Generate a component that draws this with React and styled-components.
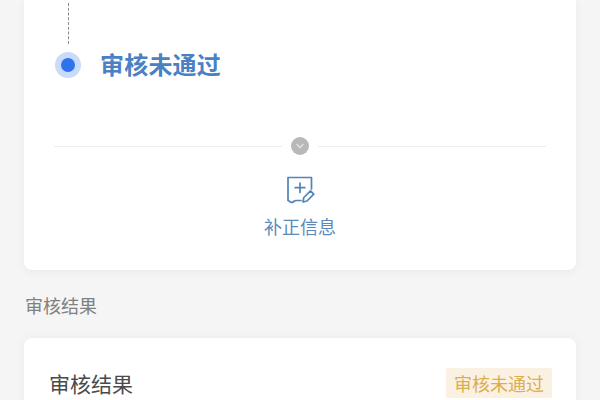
import React from "react";
import styled, { createGlobalStyle } from "styled-components";

const Global = createGlobalStyle`
  html, body { margin: 0; padding: 0; width: 600px; height: 400px; overflow: hidden; background: #f5f5f5; }
  body { font-family: "Noto Sans CJK SC", "Noto Sans", sans-serif; }
`;
const Page = styled.div`
  width: 600px; height: 400px; overflow: hidden; background: #f5f5f5;
  display: flex; flex-direction: column; padding: 0 24px; box-sizing: border-box;
`;
const Card = styled.section`
  flex: none; background: #fff; border-radius: 0 0 8px 8px;
  box-shadow: 0 2px 10px rgba(0,0,0,.05);
  height: 270px; padding: 3px 30px 0; box-sizing: border-box;
  display: flex; flex-direction: column;
`;
const Connector = styled.div`
  width: 0; height: 41px; margin-left: 13.5px;
  border-left: 1px dashed #8a8a8a;
`;
const StepRow = styled.div`
  display: flex; align-items: center; gap: 20px; margin-top: 7px; height: 28px;
`;
const Dot = styled.span`
  width: 26px; height: 26px; border-radius: 50%; background: #c9dbf8;
  display: flex; align-items: center; justify-content: center; margin-left: 1px;
  &::after { content: ""; width: 14px; height: 14px; border-radius: 50%; background: #2f72ee; }
`;
const StepTitle = styled.span`
  font-size: 24px; font-weight: 700; line-height: 26px; color: #4a80c4; margin: -2px 0 0 -1px; letter-spacing: 0.2px;
`;
const DividerRow = styled.div`
  display: flex; align-items: center; gap: 9px; margin-top: 58px; height: 18px;
`;
const Line = styled.span`flex: 1; height: 1px; background: #eeeeee;`;
const Toggle = styled.span`
  width: 18px; height: 18px; border-radius: 50%; background: #b8b8b8;
  display: flex; align-items: center; justify-content: center;
`;
const Action = styled.div`
  display: flex; flex-direction: column; align-items: center; margin-top: 20px;
`;
const ActionIcon = styled.svg`width: 30px; height: 30px;`;
const ActionLabel = styled.span`
  font-size: 18px; line-height: 24px; color: #5a8abb; margin-top: 9px;
`;
const SectionTitle = styled.h2`
  margin: 23px 0 0 1px; font-size: 18px; line-height: 24px; font-weight: 400; color: #808080;
`;
const ResultCard = styled.section`
  flex: none; margin-top: 21px; background: #fff; border-radius: 8px 8px 0 0;
  box-shadow: 0 0 10px rgba(0,0,0,.05);
  height: 100px; padding: 30px 24px 0 26px; box-sizing: border-box;
  display: flex; justify-content: space-between; align-items: flex-start;
`;
const ResultLabel = styled.span`font-size: 21px; line-height: 30px; color: #4a4a4a; margin-left: -1px;`;
const Badge = styled.span`
  font-size: 18px; line-height: 30px; color: #dcae4c; background: #fbf1e2;
  padding: 0 8px; border-radius: 2px;
`;

export default function App() {
  return (
    <Page>
      <Global />
      <Card>
        <Connector />
        <StepRow>
          <Dot />
          <StepTitle>审核未通过</StepTitle>
        </StepRow>
        <DividerRow>
          <Line />
          <Toggle>
            <svg width="10" height="10" viewBox="0 0 10 10" fill="none" stroke="#e0e0e0" strokeWidth="1.6" strokeLinecap="round" strokeLinejoin="round">
              <path d="M2 3.5 5 6.5 8 3.5" />
            </svg>
          </Toggle>
          <Line />
        </DividerRow>
        <Action>
          <ActionIcon viewBox="0 0 30 30" fill="none" stroke="#5282b8" strokeWidth="1.7" strokeLinecap="round" strokeLinejoin="round">
            <path d="M16 25.5H11C9 25.5 8.5 27.5 6.5 27.5S4.5 25.5 3 25.5V2.5H26.5V14" />
            <path d="M15 8V17.5M10.2 12.7H19.8" />
            <path d="M18 27 18.8 22.5 25.5 15.8 28.8 19.1 22 26Z" />
          </ActionIcon>
          <ActionLabel>补正信息</ActionLabel>
        </Action>
      </Card>
      <SectionTitle>审核结果</SectionTitle>
      <ResultCard>
        <ResultLabel>审核结果</ResultLabel>
        <Badge>审核未通过</Badge>
      </ResultCard>
    </Page>
  );
}
